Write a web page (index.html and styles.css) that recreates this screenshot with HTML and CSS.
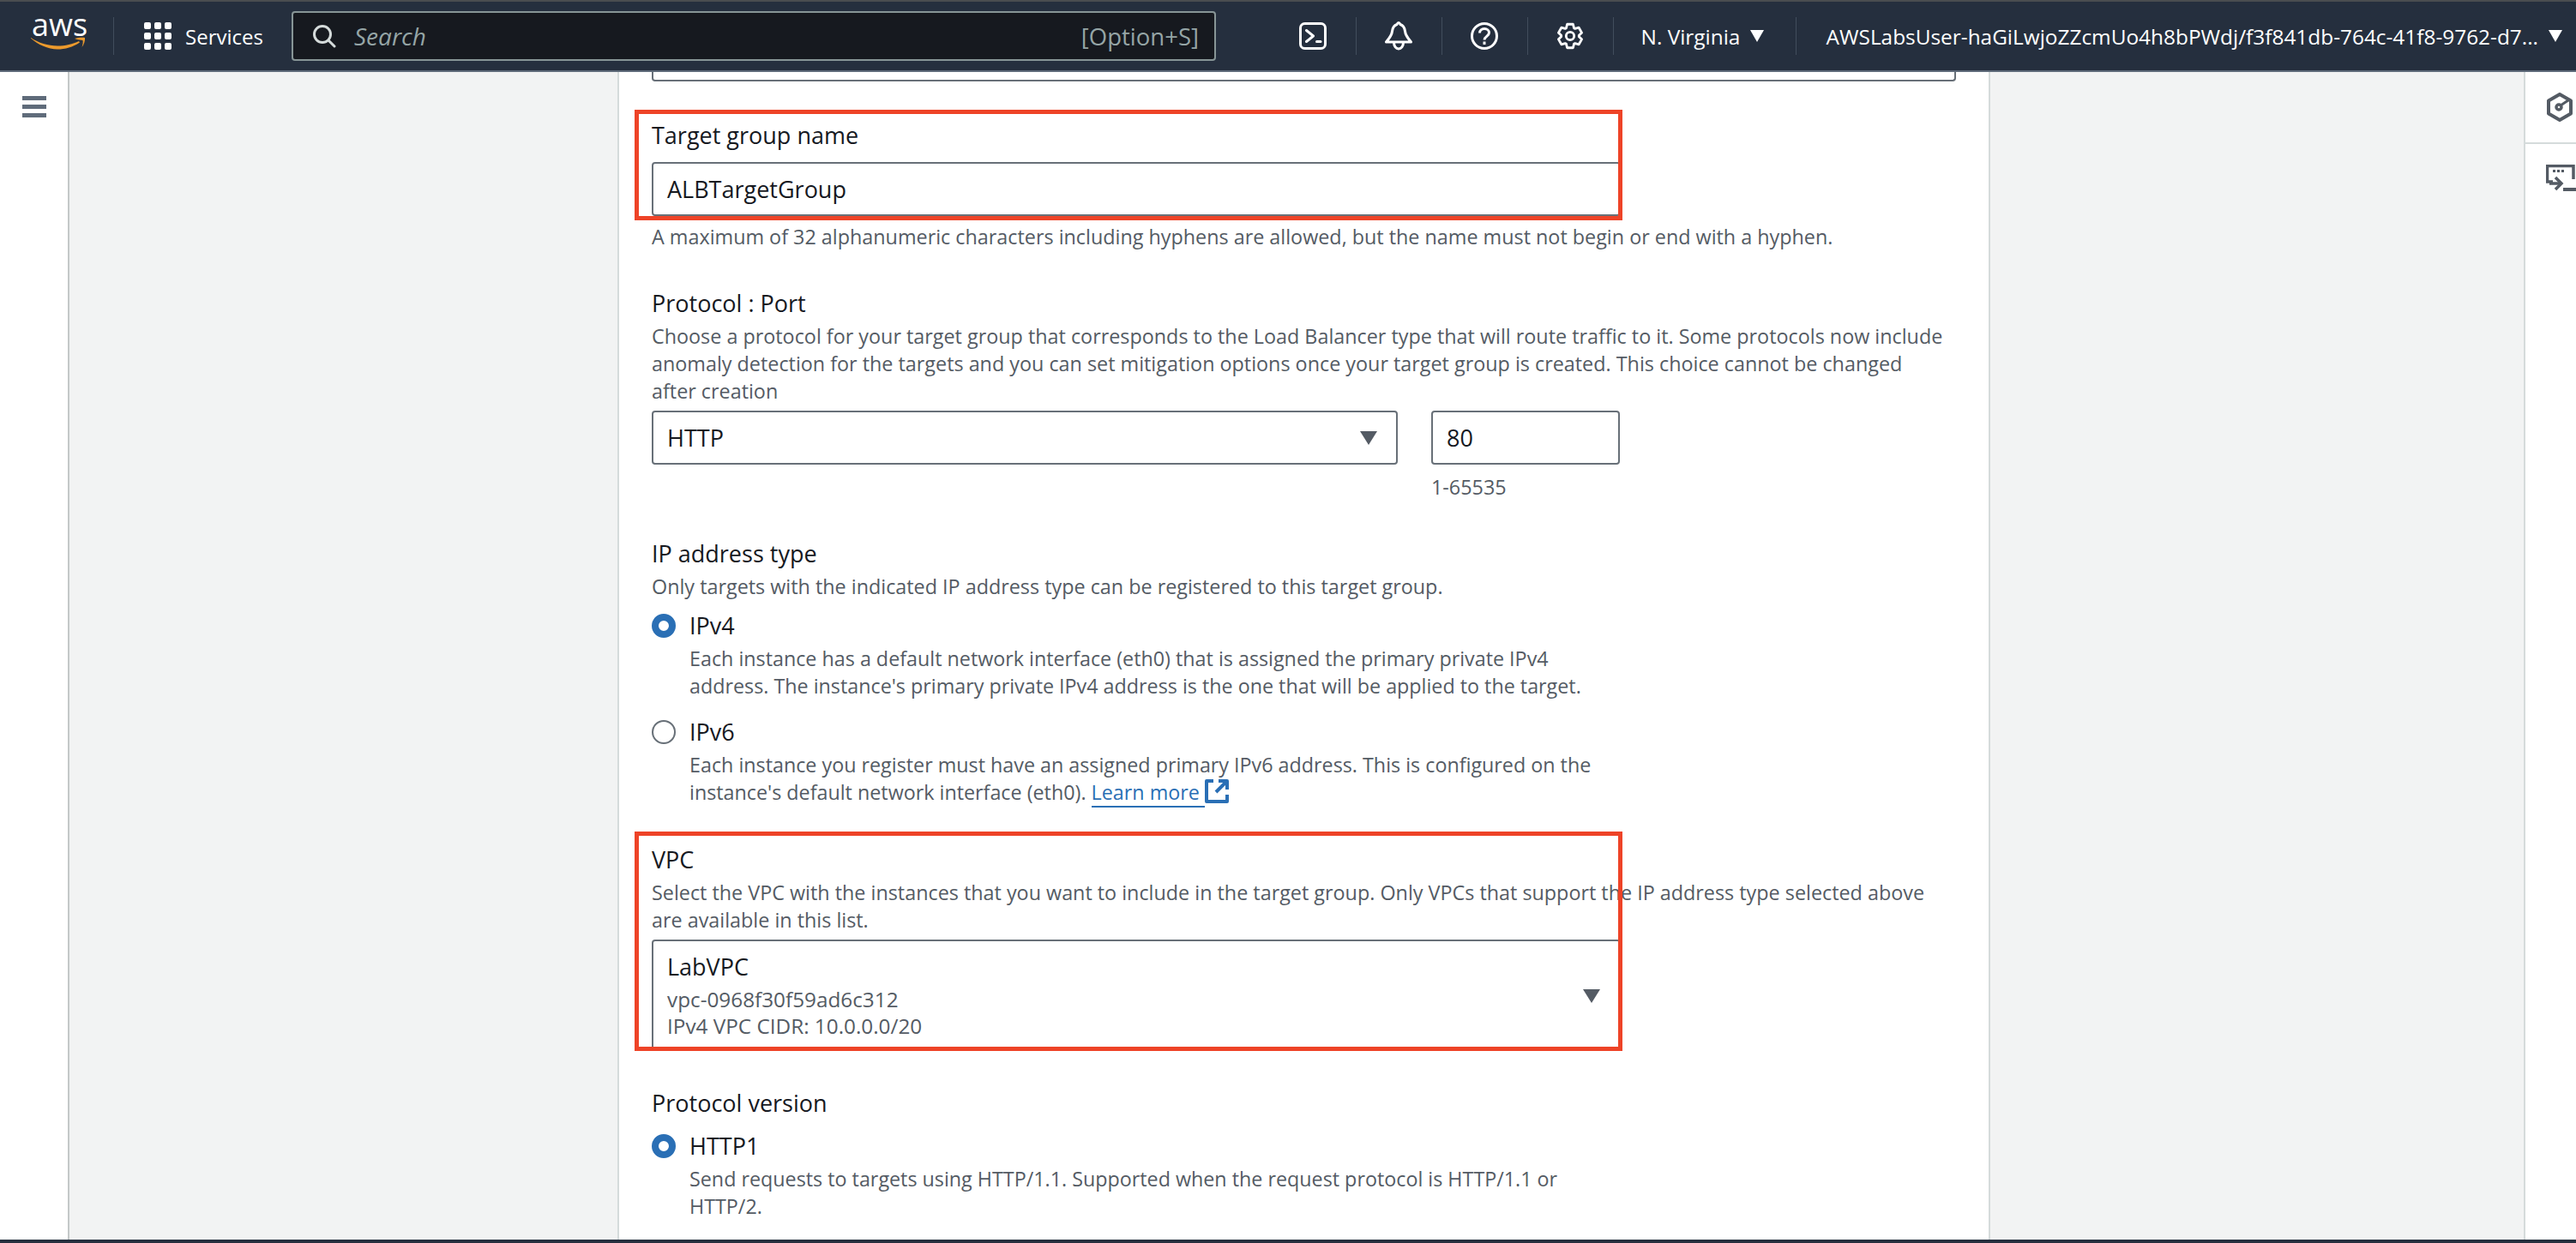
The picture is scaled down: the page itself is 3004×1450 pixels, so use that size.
FILE: index.html
```html
<!DOCTYPE html>
<html lang="en">
<head>
    <meta charset="UTF-8">
    <link rel="stylesheet" href="styles.css">
</head>
<body>
    <div class="topbar">
        <div class="nav-left">
            <div class="logo">
                <span class="logo-text">aws</span>
                <svg class="logo-smile" width="66" height="15" viewBox="0 0 66 15"><path d="M1 1c9 6 20 9.500 31 9.500 9 0 18-2 25-5.500l1 1.500C50 12 41 14.500 32 14.500 21 14.500 9 9 1 1.800z" fill="#ec9a2d"/><path d="M52 2c4-1 9-1.500 12-1 .5 3-1 8-3.500 11 1-3 1.500-6 1-8-2-.5-6-.5-9.500-2z" fill="#ec9a2d"/></svg>
            </div>
            <div class="services">
                <svg width="32" height="32" viewBox="0 0 32 32" fill="#fff"><rect x="0" y="0" width="8" height="8" rx="2"/><rect x="12" y="0" width="8" height="8" rx="2"/><rect x="24" y="0" width="8" height="8" rx="2"/><rect x="0" y="12" width="8" height="8" rx="2"/><rect x="12" y="12" width="8" height="8" rx="2"/><rect x="24" y="12" width="8" height="8" rx="2"/><rect x="0" y="24" width="8" height="8" rx="2"/><rect x="12" y="24" width="8" height="8" rx="2"/><rect x="24" y="24" width="8" height="8" rx="2"/></svg>
                <span>Services</span>
            </div>
            <div class="search">
                <svg width="28" height="28" viewBox="0 0 28 28" fill="none" stroke="#d5dbdb" stroke-width="3"><circle cx="12" cy="12" r="9.5"/><path d="M19 19l7 7" stroke-linecap="round"/></svg>
                <span class="search-text">Search</span>
                <span class="search-key">[Option+S]</span>
            </div>
        </div>
        <div class="nav-right">
            <div class="nav-icon">
                <svg width="32" height="32" viewBox="0 0 32 32" fill="none" stroke="#fff" stroke-width="3" stroke-linecap="round" stroke-linejoin="round"><rect x="1.500" y="1.500" width="29" height="29" rx="5"/><path d="M8.500 9.500l8 6.500-8 6.500"/><path d="M20.500 22.500h4.500"/></svg>
            </div>
            <div class="nav-icon">
                <svg width="32" height="34" viewBox="0 0 32 34" fill="none" stroke="#fff" stroke-width="3" stroke-linejoin="round" stroke-linecap="round"><path d="M16 1.500c-1 0-1.500 1-2 2-3 1-5 4-5.500 8-.5 5-4 9-7 12.500h29c-3-3.500-6.500-7.500-7-12.500-.5-4-2.500-7-5.500-8-.5-1-1-2-2-2z"/><path d="M10.500 24.500c0 4.500 2.500 7.500 5.500 7.500s5.500-3 5.500-7.500"/></svg>
            </div>
            <div class="nav-icon">
                <svg width="32" height="32" viewBox="0 0 32 32" fill="none" stroke="#fff" stroke-width="3"><circle cx="16" cy="16" r="14.500"/><path d="M10.500 12.500c0-3 2.500-5 5.500-5s5.500 2 5.500 4.800c0 4-5.500 4.200-5.500 8.200"/><path d="M16 22.500v3.500"/></svg>
            </div>
            <div class="nav-icon">
                <svg width="32" height="32" viewBox="-1 -1 34 34" fill="none" stroke="#fff" stroke-width="3" stroke-linejoin="round"><path d="M11.200 6.100L12.400 1.400H19.600L20.800 6.100L22.150 6.880L26.800 5.600L30.400 11.900L27 15.200V16.800L30.400 20.100L26.800 26.400L22.150 25.120L20.800 25.900L19.600 30.600H12.400L11.200 25.900L9.850 25.120L5.200 26.400L1.600 20.100L5 16.800V15.200L1.600 11.900L5.200 5.600L9.850 6.880z"/><circle cx="16" cy="16" r="5"/></svg>
            </div>
            <div class="nav-item region">N. Virginia <i class="caret"></i></div>
            <div class="nav-item account">AWSLabsUser-haGiLwjoZZcmUo4h8bPWdj/f3f841db-764c-41f8-9762-d7... <i class="caret"></i></div>
        </div>
    </div>

    <div class="layout">
        <div class="side-nav">
            <div class="burger"><span></span><span></span><span></span></div>
        </div>
        <div class="gutter"></div>
        <div class="panel">
            <div class="cut-input"></div>

            <div class="field first">
                <div class="label">Target group name</div>
                <div class="input wide">ALBTargetGroup</div>
                <div class="hint">A maximum of 32 alphanumeric characters including hyphens are allowed, but the name must not begin or end with a hyphen.</div>
            </div>

            <div class="field proto-field">
                <div class="label">Protocol : Port</div>
                <div class="desc">Choose a protocol for your target group that corresponds to the Load Balancer type that will route traffic to it. Some protocols now include anomaly detection for the targets and you can set mitigation options once your target group is created. This choice cannot be changed after creation</div>
                <div class="proto-row">
                    <div class="input select proto">HTTP<i class="arrow"></i></div>
                    <div class="port-col">
                        <div class="input port">80</div>
                        <div class="hint">1-65535</div>
                    </div>
                </div>
            </div>

            <div class="field">
                <div class="label">IP address type</div>
                <div class="desc">Only targets with the indicated IP address type can be registered to this target group.</div>
                <div class="radio-row">
                    <i class="radio on"></i>
                    <div class="radio-body">
                        <div class="radio-label">IPv4</div>
                        <div class="radio-desc">Each instance has a default network interface (eth0) that is assigned the primary private IPv4 address. The instance's primary private IPv4 address is the one that will be applied to the target.</div>
                    </div>
                </div>
                <div class="radio-row">
                    <i class="radio"></i>
                    <div class="radio-body">
                        <div class="radio-label">IPv6</div>
                        <div class="radio-desc">Each instance you register must have an assigned primary IPv6 address. This is configured on the instance's default network interface (eth0). <a class="link">Learn more&nbsp;</a><svg class="ext" width="28" height="28" viewBox="0 0 28 28" fill="none" stroke="#2a6fb5" stroke-width="4" stroke-linejoin="round"><path d="M10 2H2v24h24v-8"/><path d="M16 2h10v10M25 3L13 15"/></svg></div>
                    </div>
                </div>
            </div>

            <div class="field vpc">
                <div class="label">VPC</div>
                <div class="desc">Select the VPC with the instances that you want to include in the target group. Only VPCs that support the IP address type selected above are available in this list.</div>
                <div class="vpc-select">
                    <div class="vpc-name">LabVPC</div>
                    <div class="vpc-sub">vpc-0968f30f59ad6c312</div>
                    <div class="vpc-sub">IPv4 VPC CIDR: 10.0.0.0/20</div>
                    <i class="arrow"></i>
                </div>
            </div>

            <div class="field last">
                <div class="label">Protocol version</div>
                <div class="radio-row http">
                    <i class="radio on"></i>
                    <div class="radio-body">
                        <div class="radio-label">HTTP1</div>
                        <div class="radio-desc">Send requests to targets using HTTP/1.1. Supported when the request protocol is HTTP/1.1 or HTTP/2.</div>
                    </div>
                </div>
            </div>

            <div class="mark mark-name"></div>
            <div class="mark mark-vpc"></div>
        </div>
        <div class="gutter right"></div>
        <div class="side-tools">
            <div class="tool">
                <svg width="32" height="34" viewBox="0 0 32 34" fill="none" stroke="#545b64" stroke-width="4" stroke-linejoin="round"><path d="M16 2l13 7.500v15L16 32 3 24.500v-15z"/><circle cx="15" cy="17" r="3" stroke-width="3.500"/><path d="M17 15l9-6" stroke-width="3"/></svg>
            </div>
            <div class="tool">
                <svg width="35" height="32" viewBox="0 0 35 32" fill="none" stroke="#545b64" stroke-width="3.500"><path d="M8 20H1.500V1.500H32V17"/><path d="M8 7.500h3M13 7.500h3M18 7.500h3" stroke-width="3"/><path d="M11 15l7 7-7 7" stroke-width="3.500"/><path d="M4 22h13" stroke-width="3.500"/><path d="M20 29h15" stroke-width="4"/></svg>
            </div>
        </div>
    </div>
    <div class="bottom-strip"></div>
</body>
</html>
```

FILE: styles.css
```css
* {
    margin: 0;
    padding: 0;
    box-sizing: border-box;
}

html, body {
    height: 100%;
    overflow: hidden;
}

body {
    font-family: "Open Sans", "Noto Sans", sans-serif;
    font-size: 24px;
    color: #16191f;
    background: #f2f3f3;
    display: flex;
    flex-direction: column;
}

.topbar {
    height: 84px;
    flex: none;
    display: flex;
    justify-content: space-between;
    background: #252f3e;
    border-top: 2px solid #4a4d50;
    border-bottom: 2px solid #5f6b7a;
    color: #fff;
}

.nav-left, .nav-right {
    display: flex;
    align-items: center;
}

.logo {
    width: 133px;
    height: 44px;
    padding-left: 35px;
    border-right: 1px solid #414d5c;
    position: relative;
}

.logo-text {
    display: block;
    font-size: 36px;
    line-height: 30px;
    margin-top: -6px;
    margin-left: 2px;
}

.logo-smile {
    display: block;
    margin-top: -1px;
}

.services {
    width: 207px;
    padding-left: 35px;
    display: flex;
    align-items: center;
    gap: 16px;
    font-size: 24px;
}

.search {
    width: 1078px;
    height: 58px;
    display: flex;
    align-items: center;
    padding: 0 18px 0 22px;
    background: #16191f;
    border: 2px solid #879596;
    border-radius: 4px;
    color: #95a5a6;
    font-size: 28px;
}

.search-text {
    font-style: italic;
    margin-left: 21px;
    flex: 1;
}

.search-key {
    font-size: 27.500px;
}

.nav-right {
    padding-right: 16px;
}

.nav-icon {
    width: 100px;
    height: 44px;
    display: flex;
    align-items: center;
    justify-content: center;
    border-right: 1px solid #414d5c;
}

.nav-item {
    height: 44px;
    display: flex;
    align-items: center;
    white-space: nowrap;
    font-size: 24.400px;
}

.region {
    width: 213px;
    padding-left: 32px;
    border-right: 1px solid #414d5c;
}

.account {
    padding-left: 35px;
}

.caret {
    display: inline-block;
    margin-left: 12px;
    border-left: 8px solid transparent;
    border-right: 8px solid transparent;
    border-top: 14px solid #fff;
}

.layout {
    flex: 1;
    min-height: 0;
    display: flex;
}

.side-nav {
    width: 81px;
    background: #fff;
    border-right: 2px solid #c4c8c8;
    padding: 28px 0 0 26px;
}

.burger span {
    display: block;
    width: 28px;
    height: 5px;
    margin-bottom: 5px;
    background: #5f6b7a;
}

.gutter {
    width: 639px;
}

.gutter.right {
    width: 622px;
}

.panel {
    width: 1601px;
    position: relative;
    background: #fff;
    border-left: 2px solid #d5dbdb;
    border-right: 2px solid #d5dbdb;
    padding: 0 38px;
}

.cut-input {
    height: 11px;
    border: 2px solid #687078;
    border-top: none;
    border-radius: 0 0 4px 4px;
    margin-bottom: 45px;
}

.field {
    margin-bottom: 42px;
}

.field.first {
    margin-bottom: 44px;
}

.field.proto-field {
    margin-bottom: 44px;
}

.field.vpc {
    margin-top: 45px;
    margin-bottom: 47px;
}

.label {
    line-height: 36px;
    font-size: 27px;
}

.desc, .hint {
    font-size: 23.350px;
    line-height: 32px;
    color: #545b64;
}

.radio-desc {
    font-size: 23.300px;
    line-height: 32px;
    color: #545b64;
}

.input {
    height: 63px;
    border: 2px solid #687078;
    border-radius: 4px;
    padding: 0 16px;
    display: flex;
    align-items: center;
    font-size: 27px;
    background: #fff;
}

.input.wide {
    width: 1130px;
    margin-top: 13px;
}

.hint {
    margin-top: 8px;
}

.port-col .hint {
    margin-top: 10px;
}

.desc {
    margin-top: 4px;
    max-width: 1515px;
}

.proto-row {
    display: flex;
    gap: 39px;
    margin-top: 7px;
}

.select {
    position: relative;
}

.proto {
    width: 870px;
}

.port {
    width: 220px;
}

.arrow {
    position: absolute;
    right: 22px;
    top: 50%;
    margin-top: -8px;
    border-left: 10px solid transparent;
    border-right: 10px solid transparent;
    border-top: 16px solid #545b64;
}

.radio-row {
    display: flex;
    gap: 16px;
    margin-top: 12px;
    margin-bottom: 20px;
}

.radio-row.http {
    margin-top: 14px;
}

.radio {
    flex: none;
    width: 28px;
    height: 28px;
    margin-top: 4px;
    border-radius: 50%;
    border: 2px solid #687078;
}

.radio.on {
    border: 8px solid #2a6fb5;
}

.radio-label {
    font-size: 27px;
    line-height: 36px;
}

.radio-desc {
    width: 1070px;
    margin-top: 4px;
}

.link {
    color: #2a6fb5;
    border-bottom: 2px solid #2a6fb5;
}

.ext {
    vertical-align: -4px;
}

.vpc-select {
    position: relative;
    width: 1130px;
    height: 126px;
    margin-top: 7px;
    padding: 12px 16px 0;
    border: 2px solid #687078;
    border-bottom: none;
    border-radius: 4px 4px 0 0;
}

.vpc-name {
    font-size: 27px;
    line-height: 36px;
    margin-bottom: 4px;
}

.vpc-sub {
    font-size: 24.300px;
    line-height: 31px;
    color: #545b64;
}

.vpc-select .arrow {
    top: 64px;
}

.mark {
    position: absolute;
    left: 18px;
    width: 1152px;
    border: 5px solid #ee4327;
}

.mark-name {
    top: 44px;
    height: 129px;
}

.mark-vpc {
    top: 886px;
    height: 256px;
}

.side-tools {
    width: 61px;
    background: #fff;
    border-left: 2px solid #d5dbdb;
}

.tool {
    height: 82px;
    display: flex;
    align-items: center;
    padding-left: 24px;
    overflow: hidden;
}

.tool + .tool {
    border-top: 2px solid #d5dbdb;
}

.bottom-strip {
    height: 4px;
    flex: none;
    background: #252f3e;
}
```
